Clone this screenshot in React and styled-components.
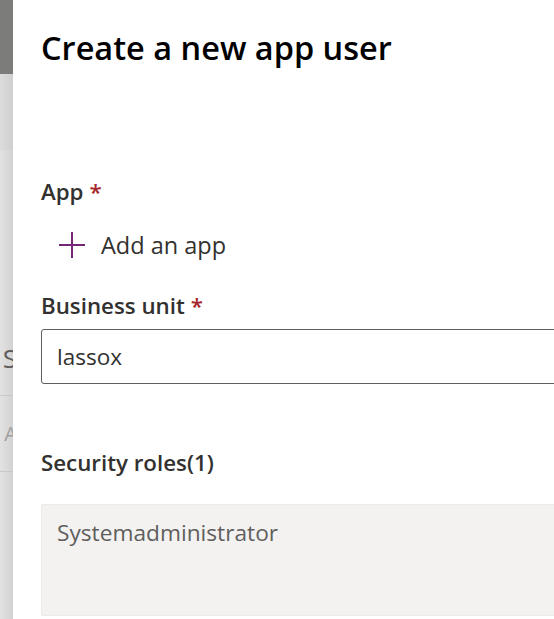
import React from "react";
import styled, { createGlobalStyle } from "styled-components";

const GlobalStyle = createGlobalStyle`
  html, body {
    margin: 0;
    padding: 0;
    height: 100%;
    overflow: hidden;
    background: #ffffff;
  }
  body {
    font-family: "Open Sans", "Noto Sans", sans-serif;
    color: #323130;
  }
`;

const Page = styled.div`
  display: flex;
  width: 554px;
  height: 619px;
  overflow: hidden;
`;

const Backdrop = styled.div`
  flex: 0 0 13px;
  display: flex;
  flex-direction: column;
  background: linear-gradient(90deg, #e2e2e2, #d2d2d2);
  overflow: hidden;
`;

const BackdropHeader = styled.div`
  height: 74px;
  background: #7c7c7a;
`;

const BackdropBand = styled.div`
  height: 76px;
  background: linear-gradient(90deg, #dcdcdc, #cfcfcf);
`;

const BackdropRow = styled.div`
  height: ${(p) => p.$h}px;
  display: flex;
  align-items: center;
  justify-content: flex-end;
  border-bottom: ${(p) => (p.$line ? "1px solid #c8c8c8" : "none")};
  font-size: ${(p) => p.$size}px;
  color: ${(p) => p.$color};
  white-space: nowrap;
  overflow: hidden;
  margin-right: -4px;
`;

const Panel = styled.div`
  flex: 1;
  padding: 26px 0 0 28px;
  display: flex;
  flex-direction: column;
  min-width: 0;
`;

const Title = styled.h1`
  margin: 0 0 107px;
  font-size: 32.5px;
  font-weight: 600;
  color: #000000;
  line-height: 44px;
  white-space: nowrap;
`;

const Label = styled.div`
  font-size: 22.3px;
  font-weight: 600;
  line-height: 30px;
  color: #323130;
  white-space: nowrap;
  margin-bottom: ${(p) => p.$mb || 0}px;
`;

const Required = styled.span`
  color: #a4262c;
  margin-left: 6px;
`;

const AddButton = styled.button`
  display: flex;
  align-items: center;
  gap: 15px;
  background: none;
  border: none;
  padding: 0 0 0 17px;
  margin: 22px 0 30px;
  height: 32px;
  font-family: inherit;
  font-size: 23.5px;
  color: #323130;
  cursor: pointer;
  align-self: flex-start;
`;

const Input = styled.div`
  box-sizing: border-box;
  height: 55px;
  margin-right: -20px;
  border: 1px solid #605e5c;
  border-radius: 3px;
  padding: 0 15px;
  display: flex;
  align-items: center;
  font-size: 22.5px;
  color: #323130;
  margin-bottom: 64px;
`;

const RolesBox = styled.div`
  box-sizing: border-box;
  height: 112px;
  margin-right: -20px;
  background: #f3f2f1;
  border: 1px solid #edebe9;
  border-radius: 2px;
  padding: 12px 15px;
  font-size: 22.7px;
  line-height: 32px;
  color: #605e5c;
`;

const PlusIcon = () => (
  <svg width="28" height="28" viewBox="0 0 28 28" fill="none">
    <path d="M14 1v26M1 14h26" stroke="#742774" strokeWidth="2" />
  </svg>
);

export default function App() {
  return (
    <>
      <GlobalStyle />
      <Page>
        <Backdrop>
          <BackdropHeader />
          <BackdropBand />
          <BackdropRow $h={170} />
          <BackdropRow $h={75} $line $size={26} $color="#605e5c">
            S
          </BackdropRow>
          <BackdropRow $h={75} $line $size={20} $color="#a19f9d">
            A
          </BackdropRow>
        </Backdrop>
        <Panel>
          <Title>Create a new app user</Title>
          <Label>
            App<Required>*</Required>
          </Label>
          <AddButton>
            <PlusIcon />
            Add an app
          </AddButton>
          <Label $mb={8}>
            Business unit<Required>*</Required>
          </Label>
          <Input>lassox</Input>
          <Label $mb={26}>Security roles(1)</Label>
          <RolesBox>Systemadministrator</RolesBox>
        </Panel>
      </Page>
    </>
  );
}
